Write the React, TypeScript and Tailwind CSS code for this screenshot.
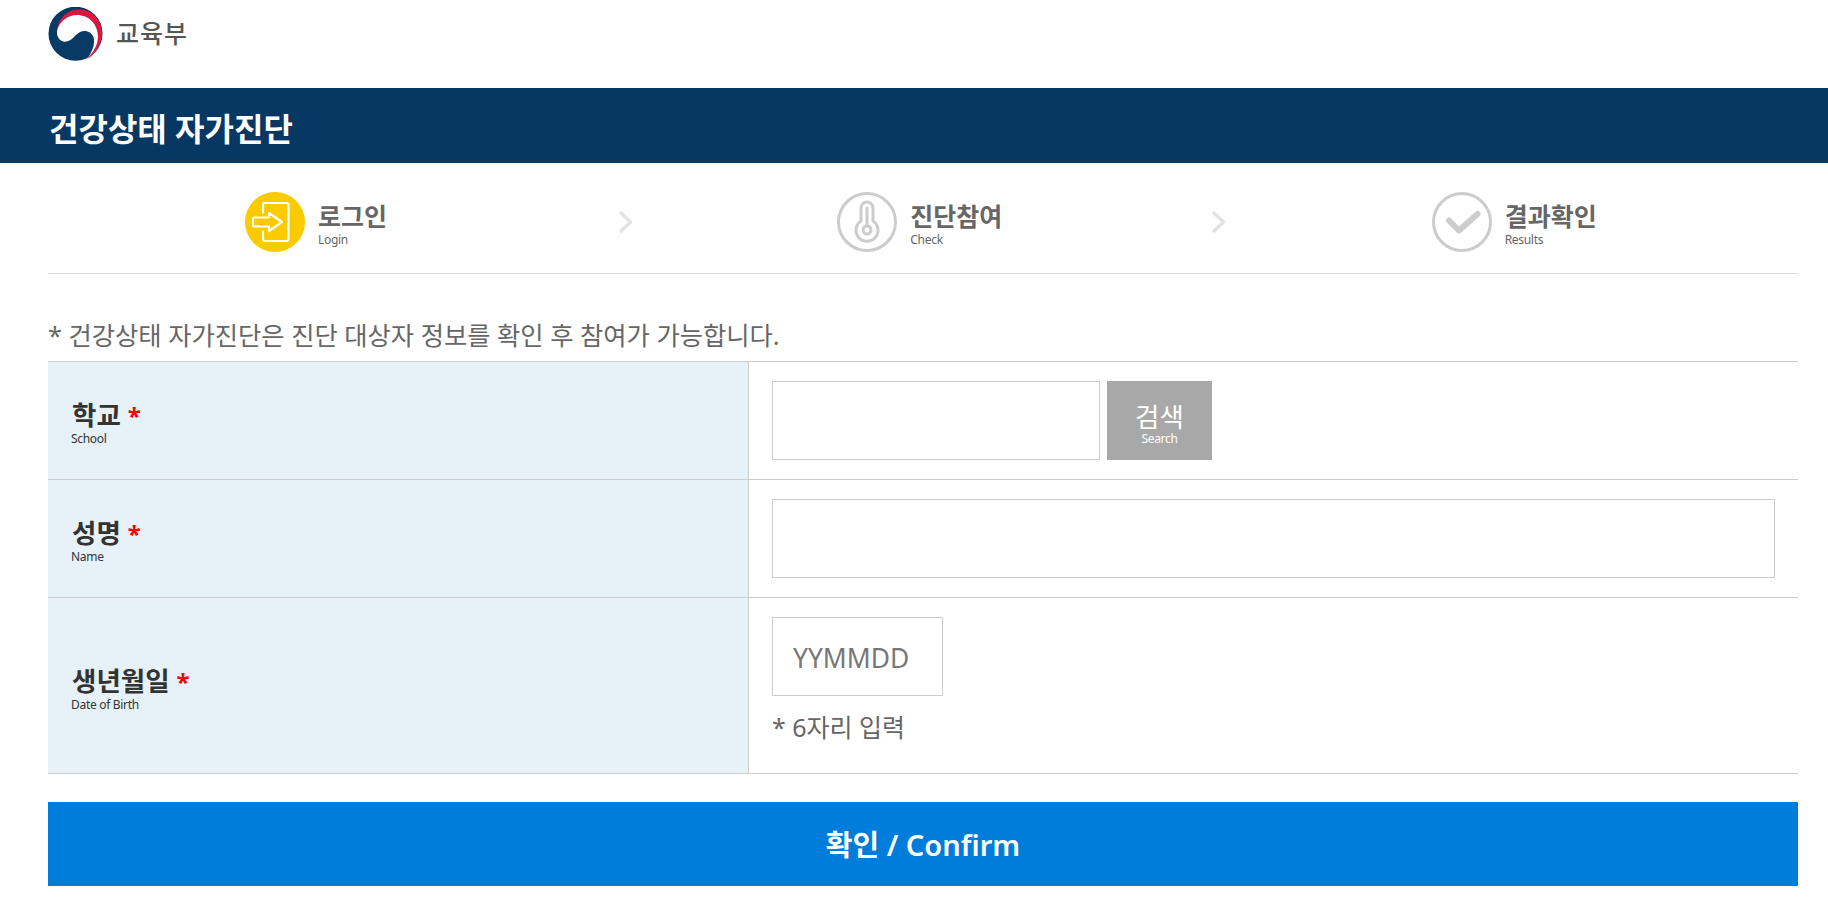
const FONT = "font-['Noto_Sans','Noto_Sans_CJK_KR',sans-serif]";

const rowBorder = "border-[#cccccc]";

function Logo() {
  return (
    <svg width="56" height="54" viewBox="0 0 56 54" className="shrink-0">
      <circle cx="27.5" cy="26.7" r="27" fill="#083a66" />
      <path
        d="M9 24 C10 11 20 2.5 31 2.5 C44 2.5 54 13 54 26 C54 37 47.5 47.5 38.5 52.5 C45 46 50 38 50 30 C50 17 41 8 29 8 C19 8 11 15 9 24 Z"
        fill="#e3143c"
      />
      <path
        d="M9 24 C11 15 19 8 29 8 C41 8 50 17 50 30 C50 38 45 46 38.5 52.5 C44 46 47.5 37 45.5 30 C43.5 24.5 37 22.5 32 25 C27 27.5 24 34.5 17 34.7 C12 34.7 8.5 30 9 24 Z"
        fill="#ffffff"
      />
    </svg>
  );
}

function LoginIcon() {
  return (
    <svg width="60" height="60" viewBox="0 0 60 60" fill="none">
      <circle cx="30" cy="30" r="30" fill="#fbca00" />
      <path
        d="M18 20.5 V13 Q18 11 20 11 H41.5 Q43.5 11 43.5 13 V47 Q43.5 49 41.5 49 H20 Q18 49 18 47 V39.5"
        stroke="#fff"
        strokeWidth="2.2"
        strokeLinecap="round"
      />
      <path
        d="M9.5 25.5 H24 V21 L37 30 L24 39 V34.5 H9.5 Q8 34.5 8 33 V27 Q8 25.5 9.5 25.5 Z"
        stroke="#fff"
        strokeWidth="2.2"
        strokeLinejoin="round"
      />
    </svg>
  );
}

function ThermoIcon() {
  return (
    <svg width="60" height="60" viewBox="0 0 60 60" fill="none">
      <circle cx="30" cy="30" r="28.5" stroke="#cccccc" strokeWidth="3" />
      <path
        d="M24 29 V16 A6 6 0 0 1 36 16 V29 A11 11 0 1 1 24 29 Z"
        stroke="#cccccc"
        strokeWidth="3"
      />
      <path d="M30 16 V33" stroke="#cccccc" strokeWidth="3" strokeLinecap="round" />
      <circle cx="30" cy="38" r="4" stroke="#cccccc" strokeWidth="3" />
    </svg>
  );
}

function CheckIcon() {
  return (
    <svg width="60" height="60" viewBox="0 0 60 60" fill="none">
      <circle cx="30" cy="30" r="28.5" stroke="#cccccc" strokeWidth="3" />
      <path
        d="M17 28.5 L27 38.5 L45.5 22"
        stroke="#cccccc"
        strokeWidth="6"
        strokeLinecap="round"
        strokeLinejoin="round"
      />
    </svg>
  );
}

function Chevron() {
  return (
    <svg width="14" height="22" viewBox="0 0 14 22" fill="none" className="shrink-0">
      <path
        d="M2 2 L11.5 11 L2 20"
        stroke="#e2e2e2"
        strokeWidth="3.4"
        strokeLinecap="round"
        strokeLinejoin="round"
      />
    </svg>
  );
}

function Step({
  icon,
  title,
  sub,
  className,
  chevronClass,
}: {
  icon: React.ReactNode;
  title: string;
  sub: string;
  className: string;
  chevronClass?: string;
}) {
  return (
    <div className={`flex items-center ${className}`}>
      <div className="shrink-0">{icon}</div>
      <div className="mt-[4px] ml-[13px] flex flex-col text-[#666666]">
        <span className="text-[25px] leading-[30px] font-bold whitespace-nowrap">{title}</span>
        <span className="text-[12px] leading-[17px] tracking-[-0.3px]">{sub}</span>
      </div>
      {chevronClass && (
        <div className={chevronClass}>
          <Chevron />
        </div>
      )}
    </div>
  );
}

function Label({ ko, en, className }: { ko: string; en: string; className: string }) {
  return (
    <div
      className={`flex w-[701px] shrink-0 flex-col justify-center border-r border-[#cccccc] bg-[#e6f2f8] pl-[24px] ${className}`}
    >
      <div className="text-[26.5px] leading-[30px] font-bold text-[#333333]">
        {ko} <span className="text-[24px] text-[#ff0000]">*</span>
      </div>
      <div className="-ml-px text-[12px] leading-[16px] tracking-[-0.3px] text-[#333333]">{en}</div>
    </div>
  );
}

export default function App() {
  return (
    <div className={`min-h-[902px] bg-white ${FONT}`}>
      <header className="flex h-[88px] items-start pt-[7px] pl-[48px]">
        <Logo />
        <span className="mt-[10px] ml-[12px] text-[25px] leading-[33px] font-medium tracking-[1px] text-[#555555]">
          교육부
        </span>
      </header>

      <div className="flex h-[75px] items-center bg-[#073763] pt-[7px] pl-[49px]">
        <h1 className="text-[32px] leading-[40px] font-bold text-white">건강상태 자가진단</h1>
      </div>

      <main className="pr-[30px] pl-[48px]">
        <div className="grid h-[111px] grid-cols-3 items-center border-b border-[#dddddd] pt-[8px]">
          <Step icon={<LoginIcon />} title="로그인" sub="Login" className="pl-[197px]" chevronClass="ml-auto -mr-[2px]" />
          <Step icon={<ThermoIcon />} title="진단참여" sub="Check" className="pl-[206px]" chevronClass="ml-auto -mr-[11px]" />
          <Step icon={<CheckIcon />} title="결과확인" sub="Results" className="pl-[217px]" />
        </div>

        <p className="mt-[44px] mb-[9px] text-[25.3px] leading-[34px] text-[#666666]">
          * 건강상태 자가진단은 진단 대상자 정보를 확인 후 참여가 가능합니다.
        </p>

        <div className={`border-t ${rowBorder}`}>
          <div className={`flex h-[118px] border-b ${rowBorder}`}>
            <Label ko="학교" en="School" className="pt-[6px]" />
            <div className="flex items-center pl-[23px]">
              <div className="h-[79px] w-[328px] border border-[#cccccc]" />
              <button className="ml-[7px] flex h-[79px] w-[105px] flex-col items-center justify-center bg-[#a8a8a8] pt-[6px] text-white">
                <span className="text-[26.5px] leading-[30px]">검색</span>
                <span className="text-[12px] leading-[14px] tracking-[-0.3px]">Search</span>
              </button>
            </div>
          </div>

          <div className={`flex h-[118px] border-b ${rowBorder}`}>
            <Label ko="성명" en="Name" className="pt-[6px]" />
            <div className="flex flex-1 items-center pr-[23px] pl-[23px]">
              <div className="h-[79px] w-full border border-[#cccccc]" />
            </div>
          </div>

          <div className={`flex h-[176px] border-b ${rowBorder}`}>
            <Label ko="생년월일" en="Date of Birth" className="pt-[8px]" />
            <div className="flex flex-col pt-[19px] pl-[23px]">
              <div className="flex h-[79px] w-[171px] items-center border border-[#cccccc] pt-[4px] pl-[20px] text-[26.4px] text-[#777777]">
                YYMMDD
              </div>
              <p className="mt-[14px] text-[25px] leading-[34px] text-[#666666]">* 6자리 입력</p>
            </div>
          </div>
        </div>

        <button className="mt-[28px] flex h-[84px] w-full items-center justify-center bg-[#007cdb] pt-[2px] text-[29px] font-semibold text-white">
          확인 / Confirm
        </button>
      </main>
    </div>
  );
}
